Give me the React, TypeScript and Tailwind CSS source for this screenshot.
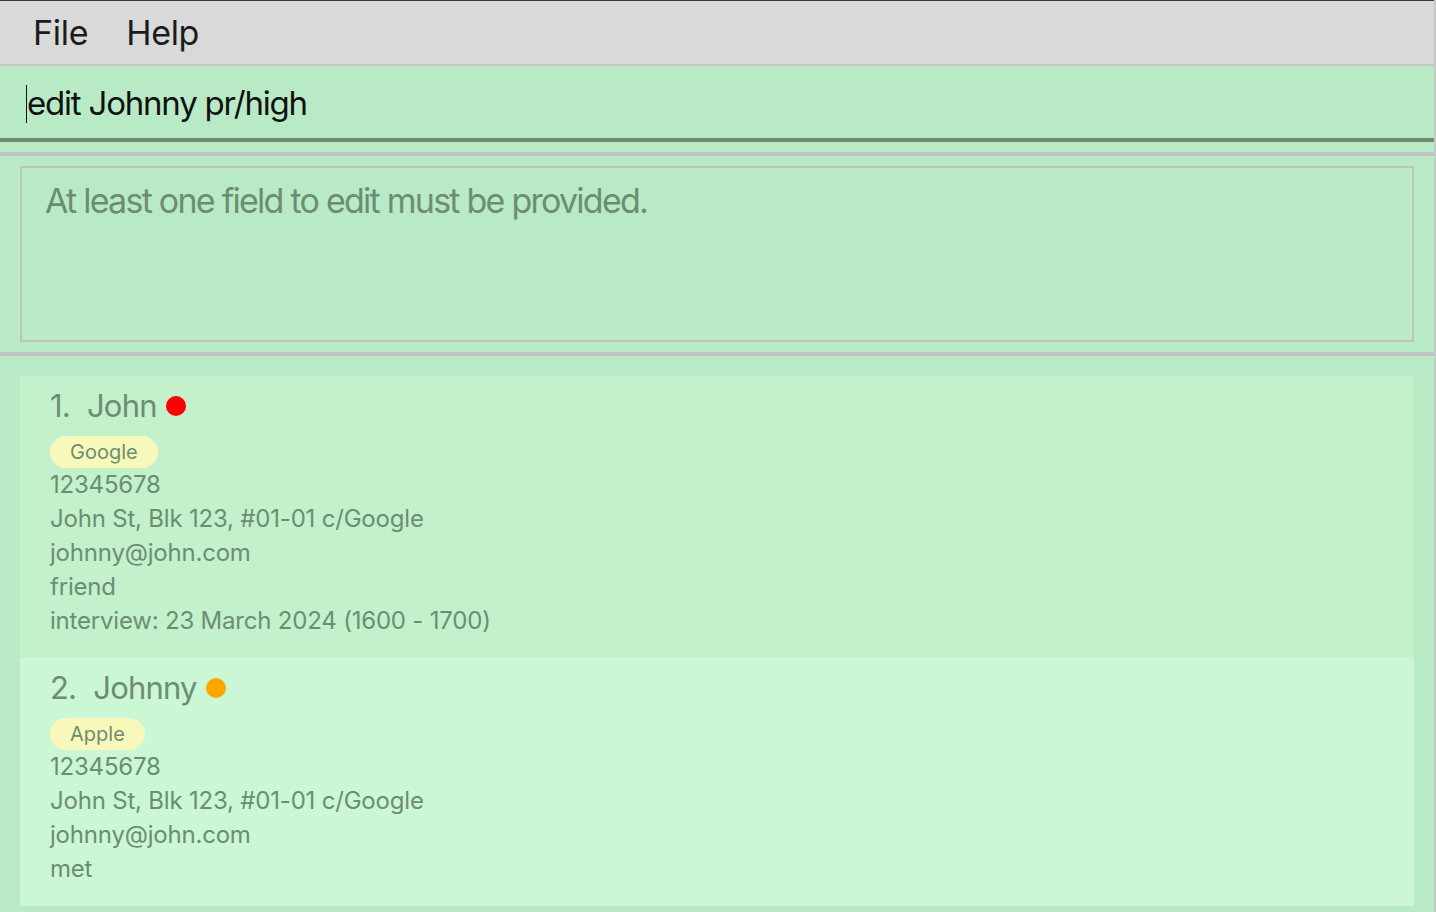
import React from 'react';

interface Person {
  index: number;
  name: string;
  dot: string;
  tag: string;
  phone: string;
  address: string;
  email: string;
  lines: string[];
  bg: string;
}

const people: Person[] = [
  {
    index: 1,
    name: 'John',
    dot: 'bg-[#ff0000]',
    tag: 'Google',
    phone: '12345678',
    address: 'John St, Blk 123, #01-01 c/Google',
    email: 'johnny@john.com',
    lines: ['friend', 'interview: 23 March 2024 (1600 - 1700)'],
    bg: 'bg-[#c3f1cc]',
  },
  {
    index: 2,
    name: 'Johnny',
    dot: 'bg-[#ffa500]',
    tag: 'Apple',
    phone: '12345678',
    address: 'John St, Blk 123, #01-01 c/Google',
    email: 'johnny@john.com',
    lines: ['met'],
    bg: 'bg-[#cbf7d4]',
  },
];

function PersonCard({ person }: { person: Person }) {
  return (
    <div className={`${person.bg} pl-[30px] pt-[10px] pb-[20px]`}>
      {/* Name row */}
      <div className="flex items-center h-[40px] text-[31px] text-[#6d8d72] tracking-[-0.8px]">
        <span>{person.index}.</span>
        <span className="ml-[17px]">{person.name}</span>
        <span className={`ml-[9px] w-[20px] h-[20px] rounded-full ${person.dot}`} />
      </div>
      {/* Tag */}
      <div className="mt-[10px] h-[32px] flex">
        <span className="h-[32px] px-[20px] rounded-full bg-[#f9f8bb] text-[20px] leading-[32px] text-[#6d8d72]">
          {person.tag}
        </span>
      </div>
      {/* Details */}
      <div className="text-[24px] leading-[34px] text-[#6d8d72] tracking-[-0.2px]">
        <div>{person.phone}</div>
        <div>{person.address}</div>
        <div>{person.email}</div>
        {person.lines.map((line) => (
          <div key={line}>{line}</div>
        ))}
      </div>
    </div>
  );
}

export default function App() {
  return (
    <div
      className="w-[1436px] h-[912px] overflow-hidden bg-[#b8eac6] border-r-2 border-[#c8c8c8] flex flex-col"
      style={{ fontFamily: 'Inter, "Liberation Sans", sans-serif' }}
    >
      {/* Menu bar */}
      <div className="h-[66px] bg-[#d9d9d9] border-t border-[#3a3a3a] border-b-2 border-b-[#c4c4c4] flex items-center pl-[33px] gap-[38px] text-[34px] text-[#1c1c1c] tracking-[-0.3px] shrink-0">
        <span>File</span>
        <span>Help</span>
      </div>

      {/* Command box */}
      <div className="h-[76px] border-b-4 border-[#6c8c70] flex items-center pl-[26px] pt-[4px] shrink-0">
        <span className="w-px h-[38px] bg-[#111]" />
        <span className="text-[33px] text-[#111] tracking-[-1.2px]">edit Johnny pr/high</span>
      </div>

      {/* Result display */}
      <div className="mt-[10px] border-t-4 border-[#c2c2c2] pt-[10px] px-[20px] pb-[10px] shrink-0">
        <div className="h-[176px] border-2 border-[#c2c2c2] pl-[23px] pt-[7px]">
          <span className="text-[34px] text-[#6d8d72] tracking-[-1.75px]">
            At least one field to edit must be provided.
          </span>
        </div>
      </div>

      {/* Person list */}
      <div className="border-t-4 border-[#c2c2c2] pt-[20px] pl-[20px] pr-[20px] flex-1">
        {people.map((p) => (
          <PersonCard key={p.index} person={p} />
        ))}
      </div>
    </div>
  );
}
